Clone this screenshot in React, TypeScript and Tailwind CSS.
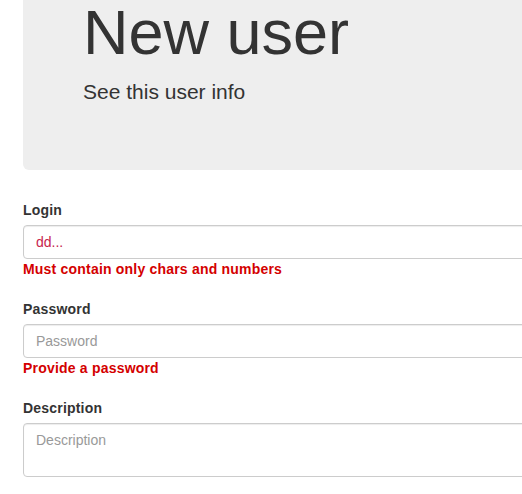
import React from 'react';

const fieldLabel = "block mb-[5px] text-[14px] leading-[20px] font-bold tracking-[0.2px] text-[#333]";
const inputBase =
  "block w-full h-[34px] px-[12px] py-[6px] text-[14px] leading-[20px] text-[#555] bg-white border border-[#ccc] rounded-[4px] shadow-[inset_0_1px_1px_rgba(0,0,0,0.075)] outline-none placeholder:text-[#999]";
const errorText = "block text-[14px] leading-[20px] font-bold tracking-[0.2px] text-[#d40000]";

export default function App() {
  return (
    <div className="h-[494px] w-[522px] overflow-hidden bg-white font-['Liberation_Sans',Arial,sans-serif] text-[#333]">
      <div className="-mt-[70px] w-[620px] pl-[23px]">
        {/* jumbotron */}
        <div className="bg-[#eee] rounded-[6px] pt-[48px] pb-[48px] pl-[60px] pr-[60px] mb-[30px]">
          <h1 className="mt-[20px] mb-[10px] text-[63px] leading-[1.1] font-normal text-[#333]">New user</h1>
          <p className="mb-[15px] text-[21px] leading-[29.4px] font-normal">See this user info</p>
        </div>

        <form className="flex flex-col gap-[20px]">
          <div>
            <label className={fieldLabel}>Login</label>
            <input className={inputBase + " !text-[#c7254e]"} defaultValue="dd..." />
            <span className={errorText}>Must contain only chars and numbers</span>
          </div>
          <div>
            <label className={fieldLabel}>Password</label>
            <input type="password" className={inputBase} placeholder="Password" />
            <span className={errorText}>Provide a password</span>
          </div>
          <div>
            <label className={fieldLabel}>Description</label>
            <textarea
              rows={2}
              className={inputBase + " !h-[54px] resize-none"}
              placeholder="Description"
            />
          </div>
        </form>
      </div>
    </div>
  );
}
